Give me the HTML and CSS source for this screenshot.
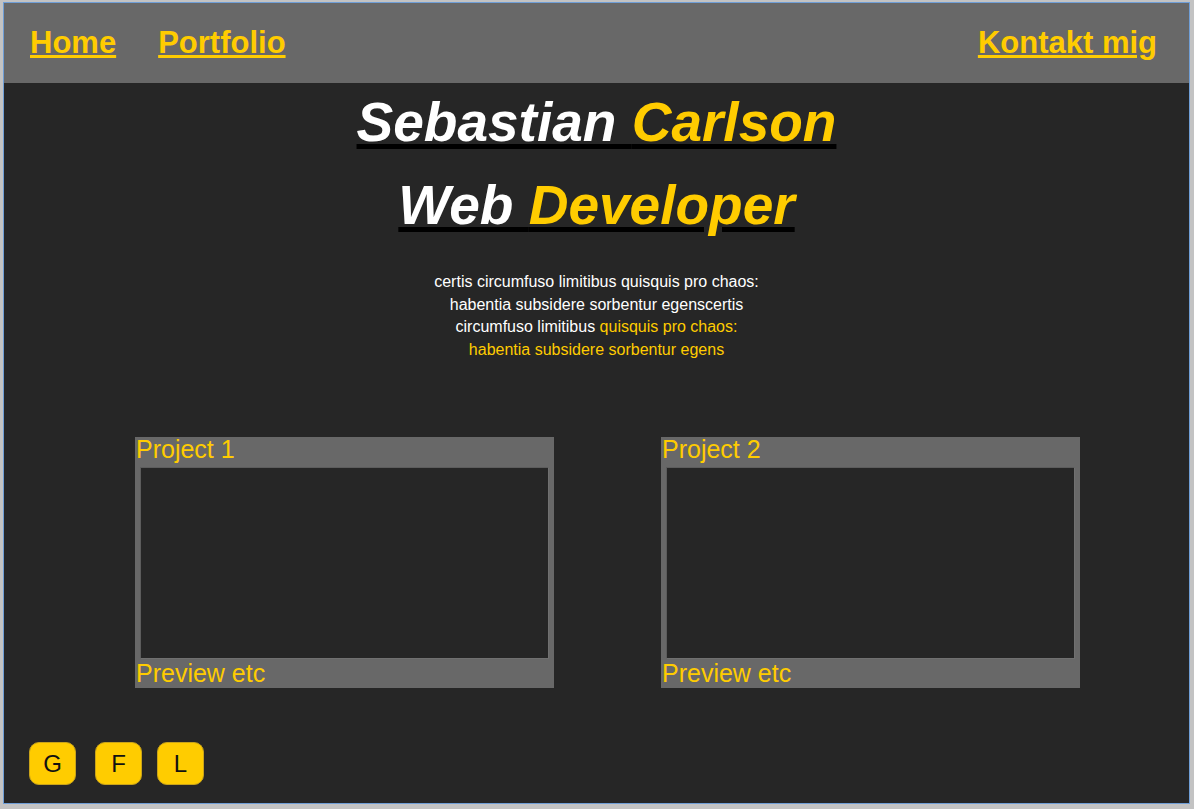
FILE: index.html
```html
<!DOCTYPE html>
<html lang="sv">
<head>
<meta charset="utf-8">
<title>Sebastian Carlson</title>
<link rel="stylesheet" href="styles.css">
</head>
<body>
<div class="frame">
  <nav class="topnav">
    <a class="nav-link" href="#">Home</a>
    <a class="nav-link" href="#">Portfolio</a>
    <a class="nav-link nav-right" href="#">Kontakt mig</a>
  </nav>
  <header class="hero">
    <h1 class="hero-title"><span class="white">Sebastian </span><span class="yellow">Carlson</span></h1>
    <h1 class="hero-title"><span class="white">Web </span><span class="yellow">Developer</span></h1>
    <p class="intro">certis circumfuso limitibus quisquis pro chaos: habentia subsidere sorbentur egenscertis circumfuso limitibus <span class="yellow">quisquis pro chaos: habentia subsidere sorbentur egens</span></p>
  </header>
  <section class="projects">
    <article class="card">
      <div class="card-title">Project 1</div>
      <div class="card-preview"></div>
      <div class="card-foot">Preview etc</div>
    </article>
    <article class="card">
      <div class="card-title">Project 2</div>
      <div class="card-preview"></div>
      <div class="card-foot">Preview etc</div>
    </article>
  </section>
  <footer class="social">
    <a class="social-btn social-first" href="#">G</a>
    <a class="social-btn" href="#">F</a>
    <a class="social-btn" href="#">L</a>
  </footer>
</div>
</body>
</html>
```
FILE: styles.css
```css
html, body {
  margin: 0;
  padding: 0;
}
body {
  background: #c3c3c3;
  font-family: "Liberation Sans", Arial, sans-serif;
  height: 809px;
  overflow: hidden;
}
.frame {
  margin: 2px 4px 0 3px;
  border: 1px solid #6f9ed6;
  height: 800px;
  background: #262626;
  display: flex;
  flex-direction: column;
}
.topnav {
  height: 80px;
  flex: none;
  background: #686868;
  display: flex;
  align-items: center;
  padding: 0 32px 0 26px;
  box-sizing: border-box;
}
.nav-link {
  color: #ffcc00;
  font-weight: bold;
  font-size: 31px;
  margin-right: 42px;
}
.nav-right {
  margin-left: auto;
  margin-right: 0;
}
.hero {
  padding-top: 8px;
  display: flex;
  flex-direction: column;
  align-items: center;
}
.hero-title {
  margin: 0 0 20px;
  font-size: 55px;
  line-height: 63px;
  font-style: italic;
  font-weight: bold;
  text-align: center;
  text-decoration: underline;
  text-decoration-color: #000;
  text-decoration-thickness: 5px;
  text-underline-offset: 3px;
}
.hero-title:nth-of-type(2) {
  margin-bottom: 0;
}
.white {
  color: #fff;
}
.yellow {
  color: #ffcc00;
}
.intro {
  margin: 34px 0 0;
  width: 340px;
  text-align: center;
  color: #fff;
  font-size: 16px;
  line-height: 22.5px;
}
.projects {
  margin-top: 76px;
  display: flex;
  gap: 107px;
  padding-left: 131px;
}
.card {
  width: 419px;
  height: 251px;
  background: #686868;
  display: flex;
  flex-direction: column;
  color: #ffcc00;
  font-size: 25px;
}
.card-title {
  line-height: 24px;
  padding-left: 1px;
}
.card-preview {
  flex: 1;
  margin: 6px 5px 0;
  background: #262626;
  border: 1px solid #5c5c5c;
  border-right-color: #707070;
  border-bottom-color: #707070;
}
.card-foot {
  line-height: 29px;
  padding-left: 1px;
}
.social {
  margin-top: 54px;
  display: flex;
  gap: 15px;
  padding-left: 25px;
}
.social-btn {
  width: 47px;
  height: 43px;
  box-sizing: border-box;
  border-radius: 10px;
  background: #ffcc00;
  border: 1px solid #c9a31a;
  color: #111;
  text-decoration: none;
  font-size: 24px;
  display: flex;
  align-items: center;
  justify-content: center;
}
.social-first {
  margin-right: 4px;
}
```
